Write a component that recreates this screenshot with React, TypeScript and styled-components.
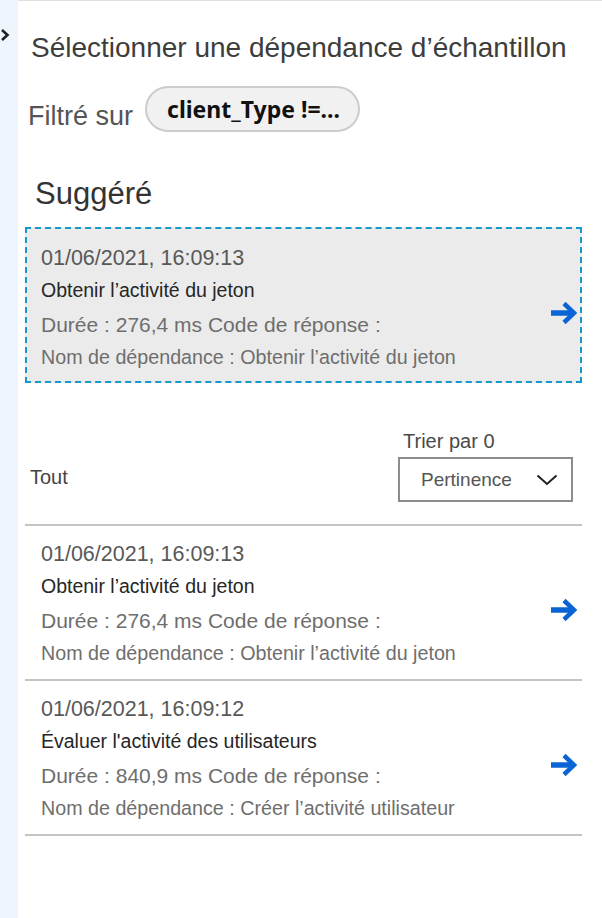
import React from "react";
import styled, { createGlobalStyle } from "styled-components";

const GlobalStyle = createGlobalStyle`
  html, body { margin: 0; padding: 0; background: #ffffff; }
  body { font-family: "Liberation Sans", Arial, sans-serif; }
  * { box-sizing: border-box; }
`;

const Page = styled.div`
  display: flex;
  width: 602px;
  min-height: 918px;
`;

const SideStrip = styled.div`
  width: 18px;
  flex: none;
  background: #eef5fd;
  padding-top: 28px;
`;

const Main = styled.div`
  flex: 1;
  border-top: 1px solid #e0e0e0;
  padding: 31px 20px 0 7px;
  display: flex;
  flex-direction: column;
`;

const Title = styled.h1`
  margin: 0 0 0 6px;
  font-size: 28px;
  line-height: 32px;
  font-weight: normal;
  color: #3d3d3d;
  white-space: nowrap;
`;

const FilterRow = styled.div`
  display: flex;
  align-items: flex-end;
  gap: 12px;
  margin: 22px 0 0 3px;
`;

const FilterLabel = styled.span`
  font-size: 27px;
  line-height: 30px;
  color: #555555;
  margin-bottom: 1px;
`;

const Pill = styled.span`
  height: 46px;
  border: 2px solid #cccccc;
  background: #f1f1f1;
  border-radius: 23px;
  padding: 0 18px 0 20px;
  display: inline-flex;
  align-items: center;
  font-family: "Noto Sans", "Open Sans", sans-serif;
  font-weight: bold;
  font-size: 23px;
  color: #111111;
  white-space: nowrap;
`;

const SectionTitle = styled.h2`
  margin: 44px 0 0 10px;
  font-size: 31px;
  line-height: 36px;
  font-weight: normal;
  color: #333333;
`;

const Entry = styled.div<{ $suggested?: boolean }>`
  display: flex;
  align-items: center;
  height: ${(p) => (p.$suggested ? "156px" : "155px")};
  padding: ${(p) => (p.$suggested ? "13px 2px 9px 14px" : "13px 4px 11px 16px")};
  background: ${(p) => (p.$suggested ? "#ebebeb" : "transparent")};
  border: ${(p) => (p.$suggested ? "2px dashed #1798cc" : "none")};
  border-bottom: ${(p) => (p.$suggested ? "2px dashed #1798cc" : "2px solid #c4c4c4")};
  margin-top: ${(p) => (p.$suggested ? "15px" : "0")};
`;

const EntryBody = styled.div`
  flex: 1;
  display: flex;
  flex-direction: column;
  white-space: nowrap;
`;

const DateLine = styled.div`
  font-size: 21.5px;
  line-height: 32px;
  color: #585858;
`;

const NameLine = styled.div`
  font-size: 19.5px;
  line-height: 32px;
  color: #262626;
`;

const MetaLine = styled.div<{ $gap?: number; $size: number }>`
  font-size: ${(p) => p.$size}px;
  line-height: 32px;
  color: #6e6e6e;
  margin-top: ${(p) => p.$gap ?? 0}px;
`;

const ArrowBox = styled.div`
  flex: none;
  width: 28px;
  height: 24px;
  margin-top: 12px;
  display: flex;
`;

const ListHeader = styled.div`
  display: flex;
  align-items: flex-end;
  justify-content: space-between;
  margin-top: 47px;
  padding-bottom: 22px;
  border-bottom: 2px solid #c4c4c4;
`;

const AllLabel = styled.span`
  font-size: 20px;
  line-height: 45px;
  color: #444444;
  margin-left: 5px;
  margin-bottom: 2px;
`;

const SortArea = styled.div`
  display: flex;
  flex-direction: column;
  margin-right: 9px;
`;

const SortLabel = styled.span`
  font-size: 20px;
  line-height: 22px;
  color: #4a4a4a;
  margin: 0 0 5px 5px;
`;

const SortBox = styled.div`
  width: 175px;
  height: 45px;
  border: 2px solid #8c8c8c;
  display: flex;
  align-items: center;
  justify-content: space-between;
  padding: 0 13px 0 21px;
  font-size: 19px;
  color: #555555;
`;

const Arrow = () => (
  <svg width="28" height="24" viewBox="0 0 28 24" fill="none">
    <path d="M1 12H23" stroke="#0a64d4" strokeWidth="5.5" />
    <path d="M14 2.5L24 12L14 21.5" stroke="#0a64d4" strokeWidth="4.5" strokeLinejoin="miter" />
  </svg>
);

const Chevron = () => (
  <svg width="10" height="14" viewBox="0 0 10 14" fill="none">
    <path d="M2 2L7.5 7L2 12" stroke="#1f1f1f" strokeWidth="2.6" />
  </svg>
);

const ChevronDown = () => (
  <svg width="22" height="12" viewBox="0 0 22 12" fill="none">
    <path d="M1.5 1.5L11 10L20.5 1.5" stroke="#1f1f1f" strokeWidth="2" />
  </svg>
);

type Item = {
  date: string;
  name: string;
  duration: string;
  dep: string;
};

const items: Item[] = [
  {
    date: "01/06/2021, 16:09:13",
    name: "Obtenir l’activité du jeton",
    duration: "276,4",
    dep: "Obtenir l’activité du jeton",
  },
  {
    date: "01/06/2021, 16:09:12",
    name: "Évaluer l'activité des utilisateurs",
    duration: "840,9",
    dep: "Créer l’activité utilisateur",
  },
];

const EntryView = ({ item, suggested }: { item: Item; suggested?: boolean }) => (
  <Entry $suggested={suggested}>
    <EntryBody>
      <DateLine>{item.date}</DateLine>
      <NameLine>{item.name}</NameLine>
      <MetaLine $gap={3} $size={21}>
        Durée : {item.duration} ms Code de réponse :
      </MetaLine>
      <MetaLine $size={19.7}>Nom de dépendance : {item.dep}</MetaLine>
    </EntryBody>
    <ArrowBox>
      <Arrow />
    </ArrowBox>
  </Entry>
);

export default function App() {
  return (
    <>
      <GlobalStyle />
      <Page>
        <SideStrip>
          <Chevron />
        </SideStrip>
        <Main>
          <Title>Sélectionner une dépendance d’échantillon</Title>
          <FilterRow>
            <FilterLabel>Filtré sur</FilterLabel>
            <Pill>client_Type !=...</Pill>
          </FilterRow>
          <SectionTitle>Suggéré</SectionTitle>
          <EntryView item={items[0]} suggested />
          <ListHeader>
            <AllLabel>Tout</AllLabel>
            <SortArea>
              <SortLabel>Trier par 0</SortLabel>
              <SortBox>
                <span>Pertinence</span>
                <ChevronDown />
              </SortBox>
            </SortArea>
          </ListHeader>
          {items.map((it) => (
            <EntryView key={it.date} item={it} />
          ))}
        </Main>
      </Page>
    </>
  );
}
